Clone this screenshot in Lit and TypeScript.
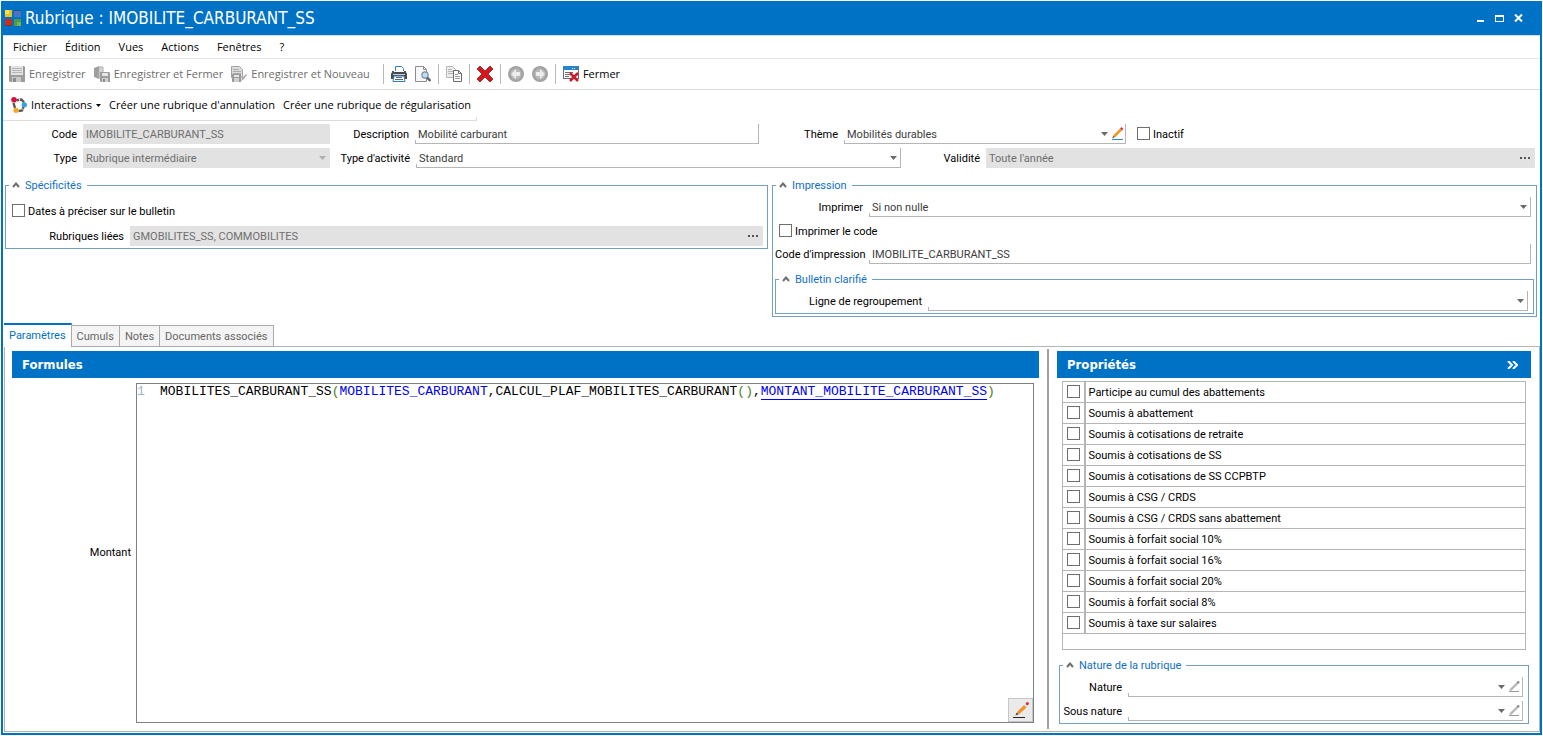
import { LitElement, html, svg, css, nothing } from "lit";
import { customElement, property, state } from "lit/decorators.js";

const icon = (body: unknown, size = 16) => html`<svg
  class="icon"
  width=${size}
  height=${size}
  viewBox="0 0 ${size} ${size}"
  aria-hidden="true"
>${body}</svg>`;

const icons = {
  app: icon(svg`
    <rect x="0" y="0" width="7" height="7" fill="#e3c22a"/><rect x="0" y="0" width="4" height="4" fill="#fbe23c"/>
    <rect x="9" y="0" width="7" height="7" fill="#4a74c0"/><rect x="9" y="0" width="7" height="1" fill="#2f4a80"/>
    <rect x="0" y="9" width="7" height="7" fill="#c92d20"/><rect x="0" y="15" width="7" height="1" fill="#7f3327"/>
    <rect x="9" y="9" width="7" height="7" fill="#4f9a45"/><rect x="12" y="12" width="4" height="4" fill="#74b552"/>`),
  save: icon(svg`
    <path d="M0 0h15l1 1v15H1l-1-1z" fill="#9c9c9c"/><rect x="2" y="0" width="12" height="9" fill="#e3e3e3"/>
    <path d="M3 2.5h10M3 4.5h10M3 6.5h10" stroke="#b5b5b5"/><rect x="3" y="11" width="9" height="5" fill="#c9c9c9"/>
    <rect x="4" y="12" width="3" height="4" fill="#8b8b8b"/>`),
  saveClose: icon(svg`
    <path d="M0 2l5-2v13l-5-2z" fill="#9f9f9f"/><path d="M5 1h4v11H5z" fill="#d6d6d6" stroke="#b0b0b0"/>
    <path d="M6 6h9l1 1v9H7l-1-1z" fill="#9c9c9c"/><rect x="8" y="7" width="6" height="3" fill="#e6e6e6"/>
    <rect x="8" y="12" width="6" height="4" fill="#d0d0d0"/><rect x="9" y="13" width="2" height="3" fill="#8b8b8b"/>`),
  saveNew: icon(svg`
    <path d="M.5.5h8l3 3v8H.5z" fill="#dcdcdc" stroke="#a3a3a3"/><path d="M2 3.5h6M2 5.5h8M2 7.5h8" stroke="#a9a9a9"/>
    <rect x="1" y="8" width="9" height="8" fill="#9c9c9c"/><rect x="3" y="9" width="5" height="2" fill="#e6e6e6"/>
    <rect x="3" y="12" width="5" height="4" fill="#d0d0d0"/><path d="M10 15l1-3 4-4 1 1-4 5z" fill="#ababab"/>`),
  print: icon(svg`
    <path d="M4.5 5V.5h6l2 2V5" fill="#fff" stroke="#2b83c6"/><path d="M1 6h14l1 2v5H0V8z" fill="#4b4b4b"/>
    <path d="M1 5h2v2H1zM13 5h2v2h-2z" fill="#555"/><rect x="2" y="8" width="12" height="1" fill="#cfcfcf"/>
    <path d="M3 10h10l1 5.5H2z" fill="#fff" stroke="#2b83c6"/><path d="M5 11.5h6M4 13.5h8" stroke="#666"/>`),
  preview: icon(svg`
    <path d="M.5.5h8l3 3v12H.5z" fill="#f7f7f7" stroke="#8d8d8d"/><path d="M8.5.5v3h3" fill="none" stroke="#8d8d8d"/>
    <circle cx="10" cy="9" r="3.2" fill="#b9defa" stroke="#7e8b95" stroke-width="1.2"/>
    <path d="M12 11.5L15.5 15" stroke="#56616b" stroke-width="2.4"/>`),
  copy: icon(svg`
    <path d="M.5.5h6l3 3v8H.5z" fill="#ececec" stroke="#b5b5b5"/><path d="M2 3.5h4M2 5.5h5M2 7.5h5" stroke="#b5b5b5"/>
    <path d="M7.5 4.5h5l3 3v8h-8z" fill="#fff" stroke="#6b6b6b"/><path d="M12.5 4.5v3h3" fill="none" stroke="#6b6b6b"/>
    <path d="M9 8.5h3M9 10.5h5M9 12.5h5" stroke="#9a9a9a"/>`),
  remove: icon(svg`
    <path d="M3 0l5 5 5-5 3 3-5 5 5 5-3 3-5-5-5 5-3-3 5-5-5-5z" fill="#d8141c" stroke="#7d2226" stroke-width=".8"/>`),
  back: icon(svg`
    <circle cx="8" cy="8" r="8" fill="#a3a3a3"/><circle cx="8" cy="8" r="5.5" fill="#b9b9b9"/>
    <path d="M8 3L3 8l5 5v-3h4V6H8z" fill="#ececec"/>`),
  forward: icon(svg`
    <circle cx="8" cy="8" r="8" fill="#a3a3a3"/><circle cx="8" cy="8" r="5.5" fill="#b9b9b9"/>
    <path d="M8 3l5 5-5 5v-3H4V6h4z" fill="#ececec"/>`),
  close: icon(svg`
    <rect x=".5" y="1.5" width="15" height="11" fill="#fff" stroke="#5d6c77"/><rect x="0" y="0" width="16" height="4" fill="#2484cc"/>
    <path d="M9 2.5h1M11 2.5h1" stroke="#fff"/><path d="M13 2.5h1" stroke="#e03030"/><path d="M2 6.5h8M2 8.5h5M2 10.5h4" stroke="#6d6d6d"/>
    <path d="M7 7l8 8M15 7l-8 8" stroke="#c9202c" stroke-width="2.6"/>`),
  interactions: icon(svg`
    <path d="M5.5 3.2l5-.7 2.500 3M12.500 10l-1.500 3.500-3.500.5M2.500 6L4 11" fill="none" stroke="#5a5a5a" stroke-width="2.400"/>
    <path d="M8.500 1.500v3M12.500 12.500l-2.500-1" stroke="#fff" stroke-width=".8"/>
    <circle cx="3" cy="2.800" r="2.800" fill="#e0103a"/><circle cx="13.300" cy="7.800" r="2.600" fill="#2ea3e6"/>
    <circle cx="5" cy="13.300" r="2.600" fill="#f6a81c"/>`),
  pencil: icon(svg`
    <path d="M1 12.5h11" stroke="#2b8bd0"/><path d="M1.5 11l1-3L9 1.5l2 2L4.5 10z" fill="#f09a2e"/>
    <path d="M9 1.5L10.5 0l2 2L11 3.5z" fill="#d8344a"/><path d="M1 11.5L2.5 9l1 1z" fill="#444"/>`, 13),
  pencilGrey: icon(svg`
    <path d="M1 11.500h10" stroke="#9a9a9a"/><path d="M2 10.500L10.500 2" stroke="#b8b8b8" stroke-width="2.400"/>
    <path d="M9.500 3l1.500-1.500" stroke="#8c8c8c" stroke-width="2.400"/>`, 13),
  pencilLarge: icon(svg`
    <path d="M0 15.5h12" stroke="#222"/><path d="M3.5 12.5l1-3L11 3l2.5 2.5L6.5 12z" fill="#f4922a"/>
    <path d="M11 3l1.5-1.5L15 4l-1.5 1.5z" fill="#d5dbe2"/><circle cx="14.4" cy="1.6" r="1.6" fill="#d8344a"/>
    <path d="M2.5 13.5l1.2-3 1.8 1.7z" fill="#444"/>`),
  arrow: html`<svg class="arrow" width="7" height="4" viewBox="0 0 7 4" aria-hidden="true">
    <path d="M0 0h7L3.5 4z" fill="currentColor"/></svg>`,
  smallArrow: html`<svg class="arrow" width="5" height="3" viewBox="0 0 5 3" aria-hidden="true">
    <path d="M0 0h5L2.5 3z" fill="currentColor"/></svg>`,
  collapse: html`<svg width="8" height="6" viewBox="0 0 8 6" aria-hidden="true">
    <path d="M1 5l3-3.5L7 5" fill="none" stroke="#6e6e6e" stroke-width="2"/></svg>`,
  dots: html`<svg width="11" height="2" viewBox="0 0 11 2" aria-hidden="true">
    <path d="M0 0h2v2H0zM4 0h2v2H4zM8 0h2v2H8z" fill="#555"/></svg>`,
};

const base = css`
  * { box-sizing: border-box; }
  button {
    font: inherit; color: inherit; background: none; border: 0; padding: 0; margin: 0;
    display: inline-flex; align-items: center;
  }
  svg { display: block; flex: none; }
`;

@customElement("form-field")
class FormField extends LitElement {
  @property() label = "";
  @property() value = "";
  @property() kind: "text" | "select" | "lookup" = "text";
  @property() edit: "" | "on" | "off" = "";
  @property({ type: Boolean }) locked = false;

  static styles = [base, css`
    :host { display: grid; grid-template-columns: var(--label-width, 80px) minmax(0, 1fr); align-items: center; height: 20px; }
    label { text-align: right; padding: 2px 6px 0 0; white-space: nowrap; color: #000; }
    .box {
      position: relative; height: 20px; display: flex; align-items: center; gap: 3px; min-width: 0;
      border: solid #b5b5b5; border-width: 0 1px 1px 0; padding: 0 3px; color: #6a6a6a;
    }
    .box::before { content: ""; position: absolute; left: 0; bottom: 0; width: 1px; height: 3px; background: #b5b5b5; }
    .editable { padding-right: 1px; }
    .locked { background: #e2e2e2; border-color: #e2e2e2; color: #b0b0b0; }
    .locked::before { display: none; }
    .control {
      flex: 1; min-width: 0; height: 19px; border: 0; padding: 2px 0 0; margin: 0; background: none; outline: none;
      appearance: none; font: inherit; color: #3c3c3c; opacity: 1;
    }
    .locked .control { color: #6f6f6f; }
  `];

  render() {
    return html`
      <label for="control">${this.label}</label>
      <div class="box ${this.locked ? "locked" : ""} ${this.edit ? "editable" : ""}">
        ${this.kind === "select"
          ? html`<select id="control" class="control" ?disabled=${this.locked}><option>${this.value}</option></select>${icons.arrow}`
          : html`<input id="control" class="control" type="text" .value=${this.value} ?readonly=${this.locked} />`}
        ${this.kind === "lookup" ? html`<button type="button" aria-label="Choisir">${icons.dots}</button>` : nothing}
        ${this.edit ? html`<button type="button" aria-label="Modifier">${this.edit === "on" ? icons.pencil : icons.pencilGrey}</button>` : nothing}
      </div>`;
  }
}

@customElement("check-box")
class CheckBox extends LitElement {
  @property() label = "";
  static styles = [base, css`
    :host { display: flex; align-items: center; }
    input { appearance: none; width: 13px; height: 13px; margin: 0 0 1px; border: 1px solid #6e6e6e; background: #fff; flex: none; }
    input:checked { background: #0072c6; }
    label { height: 14px; line-height: 16px; padding-left: 3px; white-space: nowrap; }
  `];
  render() {
    return html`<input type="checkbox" id="box" /><label for="box">${this.label}</label>`;
  }
}

@customElement("group-box")
class GroupBox extends LitElement {
  @property() heading = "";
  @state() private open = true;
  static styles = [base, css`
    :host { display: block; min-width: 0; }
    fieldset { margin: 0; padding: 0; border: 1px solid #74a0bf; min-width: 0; }
    legend { margin-left: 3px; padding: 0 5px 0 3px; height: 14px; line-height: 14px; color: #0f6fc6; }
    legend button { gap: 5px; height: 14px; }
    legend span { padding-top: 2px; }
  `];
  render() {
    return html`<fieldset>
      <legend><button type="button" aria-expanded=${this.open} @click=${() => (this.open = !this.open)}>${icons.collapse}<span>${this.heading}</span></button></legend>
      ${this.open ? html`<slot></slot>` : nothing}
    </fieldset>`;
  }
}

const MENUS = ["Fichier", "Édition", "Vues", "Actions", "Fenêtres", "?"];
const TABS = ["Paramètres", "Cumuls", "Notes", "Documents associés"];
const PROPERTIES = [
  "Participe au cumul des abattements", "Soumis à abattement", "Soumis à cotisations de retraite",
  "Soumis à cotisations de SS", "Soumis à cotisations de SS CCPBTP", "Soumis à CSG / CRDS",
  "Soumis à CSG / CRDS sans abattement", "Soumis à forfait social 10%", "Soumis à forfait social 16%",
  "Soumis à forfait social 20%", "Soumis à forfait social 8%", "Soumis à taxe sur salaires",
];

@customElement("app-root")
class AppRoot extends LitElement {
  @state() private tab = 0;

  static styles = [base, css`
    :host {
      display: flex; min-height: 100vh; padding: 1px; box-sizing: border-box; background: #fff;
      font: 11px/14px Roboto, "DejaVu Sans", sans-serif; color: #000;
    }
    .window { flex: 1; min-width: 0; display: flex; flex-direction: column; border: 2px solid #0072c6; border-top: 0; }
    .titlebar { height: 34px; background: #0072c6; color: #fff; display: flex; align-items: center; gap: 4px; padding: 0 17px 0 2px; }
    h1 { margin: 0; font: 17px/20px "DejaVu Sans Condensed", sans-serif; flex: 1; }
    .system { gap: 10px; display: flex; align-items: center; }
    .menu, .toolbar { font: 11px/16px "Open Sans", "Noto Sans", sans-serif; display: flex; align-items: center; }
    .menu { height: 24px; border-top: 1px solid #c9dff0; border-bottom: 1px solid #e6e6e6; padding-left: 10px; gap: 18px; }
    .toolbar { height: 31px; gap: 8px; border-bottom: 1px solid #dcdcdc; padding-left: 6px; }
    .toolbar button { gap: 4px; }
    .toolbar button:disabled { color: #6d6d6d; }
    .divider { width: 1px; height: 20px; background: #b9b9b9; margin: 0 -1px; }
    .divider:first-of-type { margin-left: 5px; }
    .actions { align-self: flex-start; position: relative; padding: 0 6px 0 8px; }
    .actions::after { content: ""; position: absolute; right: 0; bottom: 0; width: 1px; height: 3px; background: #dcdcdc; }
    .fields { display: grid; gap: 4px; padding: 3px 5px 0 0; }
    .row { display: grid; align-items: center; }
    .first { grid-template-columns: 327fr 429fr 367fr 409fr; }
    .second { grid-template-columns: 327fr 571fr 634fr; }
    .wide { --label-width: 85px; }
    .widest { --label-width: 86px; }
    .inactive { padding-left: 11px; }
    .groups { display: grid; grid-template-columns: 763fr 765fr; gap: 4px; align-items: start; padding: 10px 3px 0 2px; }
    .specifics { padding: 12px 4px 2px 6px; display: grid; gap: 8px; }
    .specifics .linked { --label-width: 118px; }
    .printing { padding: 5px 2px 2px; display: grid; }
    .printing form-field { --label-width: 94px; margin-right: 3px; }
    .printing check-box { padding: 7px 4px 6px; }
    .printing .nested { margin-top: 8px; }
    .nested form-field { --label-width: 152px; margin: 5px 5px 2px 0; }
    .tabs { display: flex; align-items: flex-end; margin: 6px 0 0 1px; height: 24px; }
    .tab { height: 22px; padding: 2px 5px 0; background: #f4f4f4; border: 1px solid #aaa; border-left: 0; color: #666; }
    .tab.active { height: 24px; padding-top: 0; background: #fff; color: #0072c6; border-top: 2px solid #0072c6; border-bottom: 0; }
    .tabs::after { content: ""; flex: 1; border-bottom: 1px solid #b5b5b5; }
    .panel {
      flex: 1; margin: 0 0 1px 1px; border: 1px solid #b5b5b5; border-top: 0; padding: 2px 8px 2px 7px;
      display: grid; grid-template-columns: minmax(0, 1027fr) 2px minmax(0, 474fr); column-gap: 8px;
    }
    .column { display: flex; flex-direction: column; padding-top: 2px; }
    .splitter { background: #a5a0a0; }
    .heading {
      display: flex; align-items: center; justify-content: space-between; height: 27px; padding: 0 13px 0 10px;
      background: #0072c6; color: #fff; margin: 0; font: bold 13px/16px "DejaVu Sans Condensed", sans-serif;
    }
    .formula { flex: 1; display: grid; grid-template-columns: 124px minmax(0, 1fr); padding: 5px 5px 6px 0; }
    .formula > span { align-self: center; text-align: right; padding-right: 5px; }
    .editor {
      border: 1px solid #7d8088; display: grid; grid-template-columns: 23px minmax(0, 1fr); align-content: space-between;
      font: 13px/16px "Liberation Mono", monospace;
    }
    .line { color: #9fb4c8; }
    .code { white-space: pre; outline: none; }
    .variable { color: #0000f0; }
    .linkvar { border-bottom: 1px solid #0000f0; }
    .paren { color: #4f7d1c; }
    .edit { grid-column: 1 / -1; justify-self: end; width: 25px; height: 24px; justify-content: center; background: #eaeaea; border: 1px solid #c6c6c6; }
    table { border-collapse: collapse; margin: 3px 5px 0; table-layout: fixed; }
    .check { width: 22px; }
    td { height: 21px; padding: 0 0 0 3px; border: 1px solid #b5b5b5; }
    td:first-child { padding: 0 0 0 4px; border-right-width: 2px; }
    .foot td { height: 16px; border-right-width: 1px; }
    table label { display: block; padding-top: 2px; }
    table input { display: block; appearance: none; width: 13px; height: 13px; margin: 0 0 1px; border: 1px solid #6e6e6e; }
    table input:checked { background: #0072c6; }
    .nature { margin: 8px 2px 0; }
    .nature form-field { --label-width: 68px; margin: 5px 5px 4px 0; }
    .nature form-field + form-field { margin: 0 5px 2px 0; }
  `];

  private tool(label: string, glyph: unknown, disabled = false, text = true) {
    return html`<button type="button" ?disabled=${disabled} aria-label=${label}>${glyph}${text ? html`<span>${label}</span>` : nothing}</button>`;
  }

  render() {
    const divider = html`<span class="divider"></span>`;
    return html`
      <div class="window">
        <header class="titlebar">
          ${icons.app}
          <h1>Rubrique : IMOBILITE_CARBURANT_SS</h1>
          <div class="system">
            <button type="button" aria-label="Réduire"><svg width="9" height="8" viewBox="0 0 9 8"><path d="M1 6h7v2H1z" fill="#fff"/></svg></button>
            <button type="button" aria-label="Agrandir"><svg width="9" height="8" viewBox="0 0 9 8"><path d="M0 1h9v7H0zM1 3v4h7V3z" fill="#fff" fill-rule="evenodd"/></svg></button>
            <button type="button" aria-label="Fermer la fenêtre"><svg width="9" height="8" viewBox="0 0 9 8"><path d="M1 .5L8 7.5M8 .5L1 7.5" stroke="#fff" stroke-width="2"/></svg></button>
          </div>
        </header>
        <nav class="menu">${MENUS.map((m) => html`<button type="button">${m}</button>`)}</nav>
        <div class="toolbar">
          ${this.tool("Enregistrer", icons.save, true)}
          ${this.tool("Enregistrer et Fermer", icons.saveClose, true)}
          ${this.tool("Enregistrer et Nouveau", icons.saveNew, true)}
          ${divider}
          ${this.tool("Imprimer", icons.print, false, false)}
          ${this.tool("Aperçu", icons.preview, false, false)}
          ${divider}
          ${this.tool("Dupliquer", icons.copy, false, false)}
          ${divider}
          ${this.tool("Supprimer", icons.remove, false, false)}
          ${divider}
          ${this.tool("Précédent", icons.back, true, false)}
          ${this.tool("Suivant", icons.forward, true, false)}
          ${divider}
          ${this.tool("Fermer", icons.close)}
        </div>
        <div class="toolbar actions">
          <button type="button">${icons.interactions}<span>Interactions</span>${icons.smallArrow}</button>
          <button type="button">Créer une rubrique d'annulation</button>
          <button type="button">Créer une rubrique de régularisation</button>
        </div>
        <section class="fields">
          <div class="row first">
            <form-field label="Code" value="IMOBILITE_CARBURANT_SS" locked></form-field>
            <form-field class="wide" label="Description" value="Mobilité carburant"></form-field>
            <form-field class="wide" label="Thème" value="Mobilités durables" kind="select" edit="on"></form-field>
            <check-box class="inactive" label="Inactif"></check-box>
          </div>
          <div class="row second">
            <form-field label="Type" value="Rubrique intermédiaire" kind="select" locked></form-field>
            <form-field class="widest" label="Type d'activité" value="Standard" kind="select"></form-field>
            <form-field class="wide" label="Validité" value="Toute l'année" kind="lookup" locked></form-field>
          </div>
        </section>
        <section class="groups">
          <group-box heading="Spécificités">
            <div class="specifics">
              <check-box label="Dates à préciser sur le bulletin"></check-box>
              <form-field class="linked" label="Rubriques liées" value="GMOBILITES_SS, COMMOBILITES" kind="lookup" locked></form-field>
            </div>
          </group-box>
          <group-box heading="Impression">
            <div class="printing">
              <form-field label="Imprimer" value="Si non nulle" kind="select"></form-field>
              <check-box label="Imprimer le code"></check-box>
              <form-field label="Code d'impression" value="IMOBILITE_CARBURANT_SS"></form-field>
              <group-box class="nested" heading="Bulletin clarifié">
                <form-field label="Ligne de regroupement" kind="select"></form-field>
              </group-box>
            </div>
          </group-box>
        </section>
        <div class="tabs" role="tablist">
          ${TABS.map((t, i) => html`<button type="button" role="tab" aria-selected=${this.tab === i}
            class="tab ${this.tab === i ? "active" : ""}" @click=${() => (this.tab = i)}>${t}</button>`)}
        </div>
        <main class="panel">
          <section class="column">
            <h2 class="heading">Formules</h2>
            <div class="formula">
              <span id="amount">Montant</span>
              <div class="editor">
                <span class="line">1</span>
                <div class="code" role="textbox" aria-labelledby="amount" contenteditable="true" spellcheck="false">MOBILITES_CARBURANT_SS<span class="paren">(</span><span class="variable">MOBILITES_CARBURANT</span>,CALCUL_PLAF_MOBILITES_CARBURANT<span class="paren">()</span>,<span class="variable linkvar">MONTANT_MOBILITE_CARBURANT_SS</span><span class="paren">)</span></div>
                <button class="edit" type="button" aria-label="Modifier la formule">${icons.pencilLarge}</button>
              </div>
            </div>
          </section>
          <div class="splitter"></div>
          <section class="column">
            <h2 class="heading">Propriétés
              <button type="button" aria-label="Replier"><svg width="11" height="8" viewBox="0 0 11 8"><path d="M1 0l4 4-4 4M6 0l4 4-4 4" fill="none" stroke="#fff" stroke-width="2"/></svg></button>
            </h2>
            <table>
              <colgroup><col class="check" /><col /></colgroup>
              <tbody>
                ${PROPERTIES.map((p, i) => html`<tr>
                  <td><input type="checkbox" id="property-${i}" /></td>
                  <td><label for="property-${i}">${p}</label></td>
                </tr>`)}
                <tr class="foot"><td colspan="2"></td></tr>
              </tbody>
            </table>
            <group-box class="nature" heading="Nature de la rubrique">
              <form-field label="Nature" kind="select" edit="off"></form-field>
              <form-field label="Sous nature" kind="select" edit="off"></form-field>
            </group-box>
          </section>
        </main>
      </div>`;
  }
}
